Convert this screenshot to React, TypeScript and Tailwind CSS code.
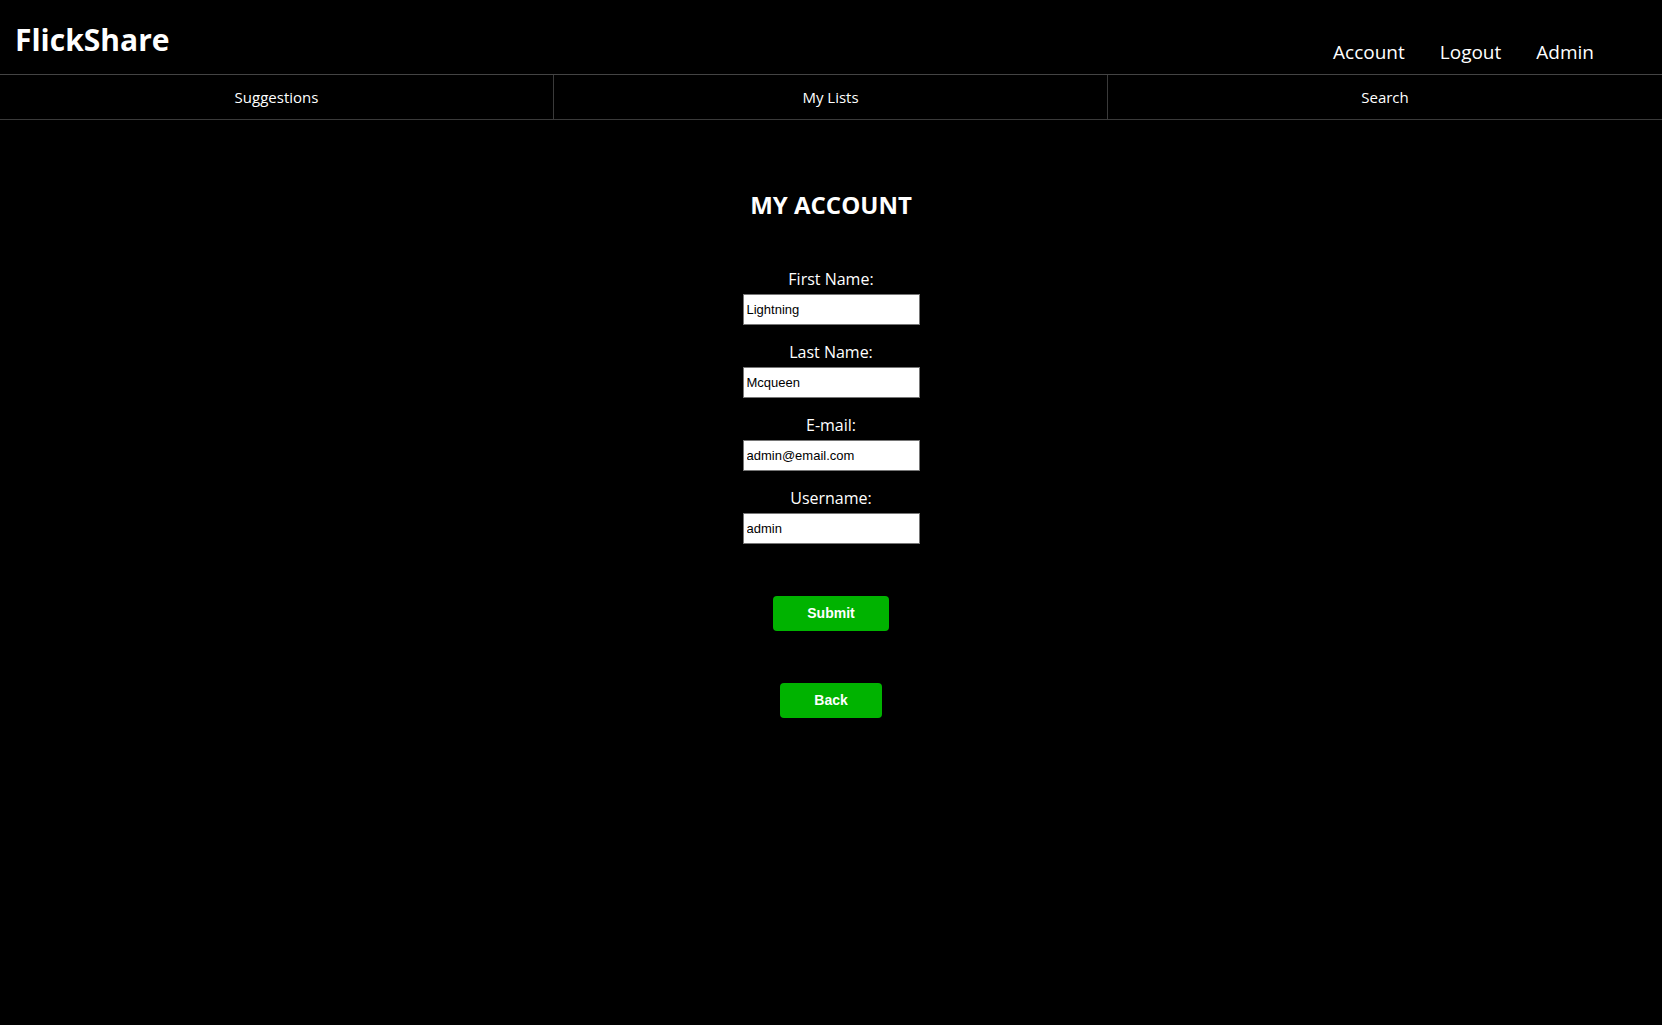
import React from "react";

const sans = { fontFamily: '"Open Sans", "Noto Sans", sans-serif' };

function Field({ label, value }: { label: string; value: string }) {
  return (
    <div className="flex flex-col items-center">
      <label className="text-[16px] leading-[22px] text-white" style={sans}>
        {label}
      </label>
      <input
        readOnly
        value={value}
        className="mt-[4px] h-[31px] w-[177px] border border-[#767676] bg-white px-[3px] text-[13px] text-black outline-none"
        style={{ fontFamily: '"Liberation Sans", Arial, sans-serif' }}
      />
    </div>
  );
}

export default function App() {
  return (
    <div className="min-h-[1025px] w-full bg-black text-white" style={sans}>
      <header className="flex h-[75px] items-start justify-between border-b border-[#444]">
        <div className="ml-[15px] mt-[19px] text-[30px] font-bold leading-[42px]">FlickShare</div>
        <nav className="mr-[68px] mt-[38px] flex gap-[35px] text-[19px] leading-[28px]">
          <span>Account</span>
          <span>Logout</span>
          <span>Admin</span>
        </nav>
      </header>
      <div className="grid h-[45px] grid-cols-3 border-b border-[#3a3a3a] text-[15px]">
        <div className="flex items-center justify-center border-r border-[#3a3a3a] pt-[1px]">Suggestions</div>
        <div className="flex items-center justify-center border-r border-[#3a3a3a] pt-[1px]">My Lists</div>
        <div className="flex items-center justify-center pt-[1px]">Search</div>
      </div>
      <main className="flex flex-col items-center">
        <h1 className="mt-[69px] text-[24px] font-bold leading-[32px]">MY ACCOUNT</h1>
        <div className="mt-[47px] flex flex-col gap-[16px]">
          <Field label="First Name:" value="Lightning" />
          <Field label="Last Name:" value="Mcqueen" />
          <Field label="E-mail:" value="admin@email.com" />
          <Field label="Username:" value="admin" />
        </div>
        <button
          className="mt-[52px] h-[35px] w-[116px] rounded-[4px] bg-[#00b300] text-[14px] font-bold text-white"
          style={{ fontFamily: '"Liberation Sans", Arial, sans-serif' }}
        >
          Submit
        </button>
        <button
          className="mt-[52px] h-[35px] w-[102px] rounded-[4px] bg-[#00b300] text-[14px] font-bold text-white"
          style={{ fontFamily: '"Liberation Sans", Arial, sans-serif' }}
        >
          Back
        </button>
      </main>
    </div>
  );
}
